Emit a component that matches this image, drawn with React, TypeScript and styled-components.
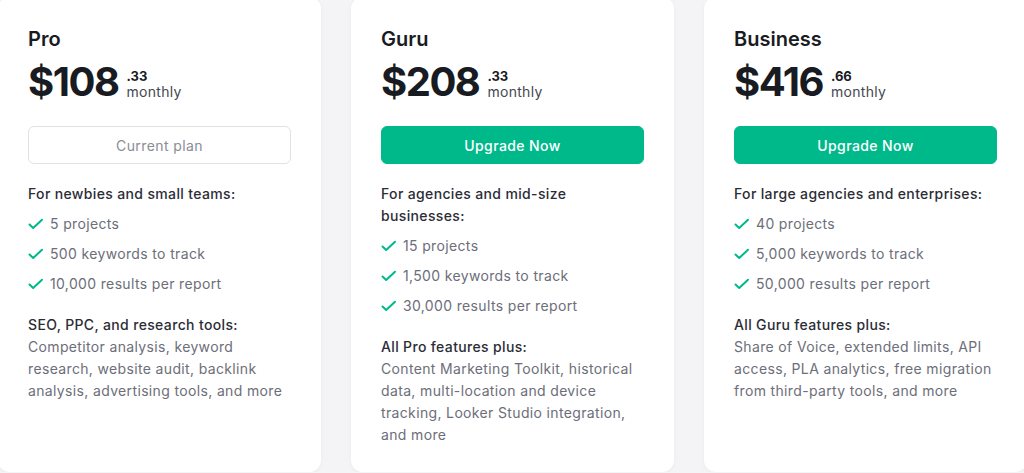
import React from "react";
import styled, { createGlobalStyle } from "styled-components";

const GlobalStyle = createGlobalStyle`
  html, body {
    margin: 0;
    padding: 0;
    background: #f4f4f6;
    overflow: hidden;
  }
  body {
    font-family: Inter, "Noto Sans", "Liberation Sans", sans-serif;
    color: #191b23;
    -webkit-font-smoothing: antialiased;
  }
`;

const Row = styled.div`
  display: flex;
  gap: 30px;
  margin-left: -2px;
  margin-top: -3px;
`;

const Card = styled.section`
  flex: 0 0 323px;
  box-sizing: border-box;
  height: 475px;
  background: #ffffff;
  border-radius: 12px;
  padding: 28px 30px 0;
  box-shadow: 0 1px 4px rgba(25, 27, 35, 0.04);
`;

const Title = styled.h2`
  margin: 0;
  font-size: 20px;
  line-height: 28px;
  font-weight: 600;
  color: #191b23;
`;

const PriceRow = styled.div`
  display: flex;
  align-items: flex-end;
  margin-top: 5px;
  height: 48px;
`;

const Amount = styled.span`
  font-size: 40px;
  line-height: 48px;
  font-weight: 700;
  letter-spacing: -1.5px;
  color: #191b23;
`;

const PriceSide = styled.div`
  display: flex;
  flex-direction: column;
  margin-left: 8px;
  margin-bottom: 6px;
`;

const Cents = styled.span`
  font-size: 13px;
  line-height: 16px;
  font-weight: 700;
  color: #191b23;
`;

const Period = styled.span`
  font-size: 14px;
  line-height: 16px;
  letter-spacing: 0.3px;
  color: #45474f;
`;

const Button = styled.button<{ $primary?: boolean }>`
  display: block;
  width: 100%;
  height: 38px;
  margin-top: 20px;
  border-radius: 6px;
  box-sizing: border-box;
  font-family: inherit;
  font-size: 14px;
  letter-spacing: 0.4px;
  font-weight: ${(p) => (p.$primary ? 500 : 400)};
  cursor: pointer;
  border: 1px solid ${(p) => (p.$primary ? "#00b98b" : "#e0e1e9")};
  background: ${(p) => (p.$primary ? "#00b98b" : "#ffffff")};
  color: ${(p) => (p.$primary ? "#ffffff" : "#8a8c96")};
`;

const Heading = styled.p<{ $gap: number }>`
  margin: ${(p) => p.$gap}px 0 0;
  font-size: 14px;
  line-height: 22px;
  letter-spacing: 0.35px;
  font-weight: 500;
  color: #2b2d36;
`;

const List = styled.ul`
  list-style: none;
  margin: 0;
  padding: 0;
`;

const Item = styled.li`
  display: flex;
  align-items: center;
  gap: 6px;
  margin-top: 8px;
  font-size: 14px;
  line-height: 22px;
  letter-spacing: 0.35px;
  color: #6c6e79;
`;

const Desc = styled.p`
  margin: 0;
  font-size: 14px;
  line-height: 22px;
  letter-spacing: 0.35px;
  color: #6c6e79;
`;

const Check = () => (
  <svg width="16" height="16" viewBox="0 0 16 16" fill="none" aria-hidden="true">
    <path
      d="M1.5 8.5 L5.2 12 L14 3.8"
      stroke="#00b98b"
      strokeWidth="2"
      strokeLinecap="round"
      strokeLinejoin="round"
    />
  </svg>
);

type Plan = {
  name: string;
  amount: string;
  cents: string;
  current?: boolean;
  audience: string;
  items: string[];
  extraTitle: string;
  extra: string;
};

const plans: Plan[] = [
  {
    name: "Pro",
    amount: "$108",
    cents: ".33",
    current: true,
    audience: "For newbies and small teams:",
    items: ["5 projects", "500 keywords to track", "10,000 results per report"],
    extraTitle: "SEO, PPC, and research tools:",
    extra:
      "Competitor analysis, keyword research, website audit, backlink analysis, advertising tools, and more",
  },
  {
    name: "Guru",
    amount: "$208",
    cents: ".33",
    audience: "For agencies and mid-size businesses:",
    items: ["15 projects", "1,500 keywords to track", "30,000 results per report"],
    extraTitle: "All Pro features plus:",
    extra:
      "Content Marketing Toolkit, historical data, multi-location and device tracking, Looker Studio integration, and more",
  },
  {
    name: "Business",
    amount: "$416",
    cents: ".66",
    audience: "For large agencies and enterprises:",
    items: ["40 projects", "5,000 keywords to track", "50,000 results per report"],
    extraTitle: "All Guru features plus:",
    extra:
      "Share of Voice, extended limits, API access, PLA analytics, free migration from third-party tools, and more",
  },
];

export default function App() {
  return (
    <>
      <GlobalStyle />
      <Row>
        {plans.map((p) => (
          <Card key={p.name}>
            <Title>{p.name}</Title>
            <PriceRow>
              <Amount>{p.amount}</Amount>
              <PriceSide>
                <Cents>{p.cents}</Cents>
                <Period>monthly</Period>
              </PriceSide>
            </PriceRow>
            <Button $primary={!p.current}>
              {p.current ? "Current plan" : "Upgrade Now"}
            </Button>
            <Heading $gap={19}>{p.audience}</Heading>
            <List>
              {p.items.map((it) => (
                <Item key={it}>
                  <Check />
                  {it}
                </Item>
              ))}
            </List>
            <Heading $gap={19}>{p.extraTitle}</Heading>
            <Desc>{p.extra}</Desc>
          </Card>
        ))}
      </Row>
    </>
  );
}
